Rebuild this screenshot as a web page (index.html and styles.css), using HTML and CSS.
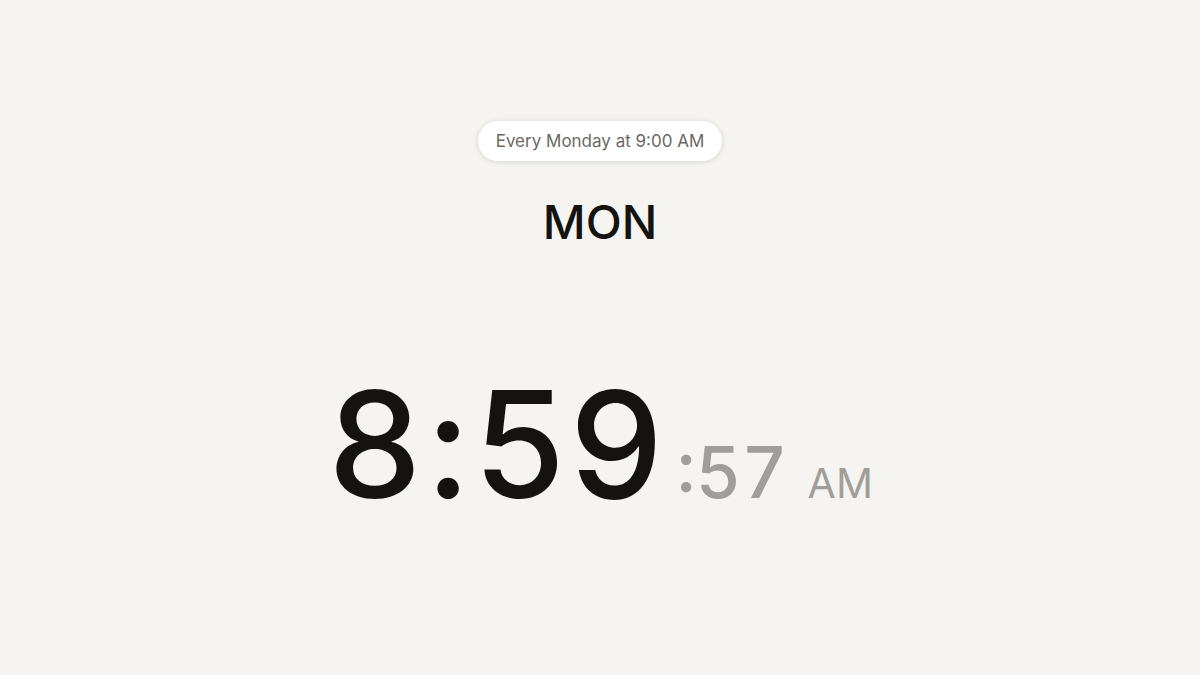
FILE: index.html
```html
<!DOCTYPE html>
<html lang="en">
<head>
    <meta charset="UTF-8">
    <meta name="viewport" content="width=device-width, initial-scale=1.0">
    <title>Monday Clock</title>
    <link rel="stylesheet" href="styles.css">
</head>
<body>

    <main class="clock">
        <p class="schedule">Every Monday at 9:00 AM</p>
        <h1 class="day">MON</h1>
        <div class="time">
            <span class="hours">8<span class="colon">:</span>59</span>
            <span class="seconds">:57</span>
            <span class="period">AM</span>
        </div>
    </main>

</body>
</html>
```

FILE: styles.css
```css
body {
    margin: 0;
    font-family: Inter, sans-serif;
    background-color: #f6f4f0;
    color: #141310;
}
.clock {
    display: flex;
    flex-direction: column;
    align-items: center;
    padding-top: 121px;
}
.schedule {
    margin: 0;
    padding: 10px 18px;
    border-radius: 20px;
    font-size: 17px;
    line-height: 20px;
    color: #6b6963;
    background-color: white;
    box-shadow: 0 1px 6px rgba(0, 0, 0, 0.12);
}
.day {
    margin: 32px 0 0;
    font-size: 47px;
    line-height: 58px;
    font-weight: 500;
}
/* Hours, seconds and AM/PM share one baseline */
.time {
    display: flex;
    align-items: baseline;
    margin-top: 104px;
}
.hours {
    font-size: 148px;
    line-height: 180px;
    font-weight: 500;
    font-variant-numeric: tabular-nums;
    font-variant-ligatures: no-contextual;
}
.colon {
    margin: 0 5px;
}
.seconds {
    margin-left: 12px;
    font-size: 71px;
    font-weight: 500;
    color: #9f9e9b;
    font-variant-numeric: tabular-nums;
}
.period {
    margin-left: 20px;
    font-size: 41px;
    color: #9f9e9b;
}
```
